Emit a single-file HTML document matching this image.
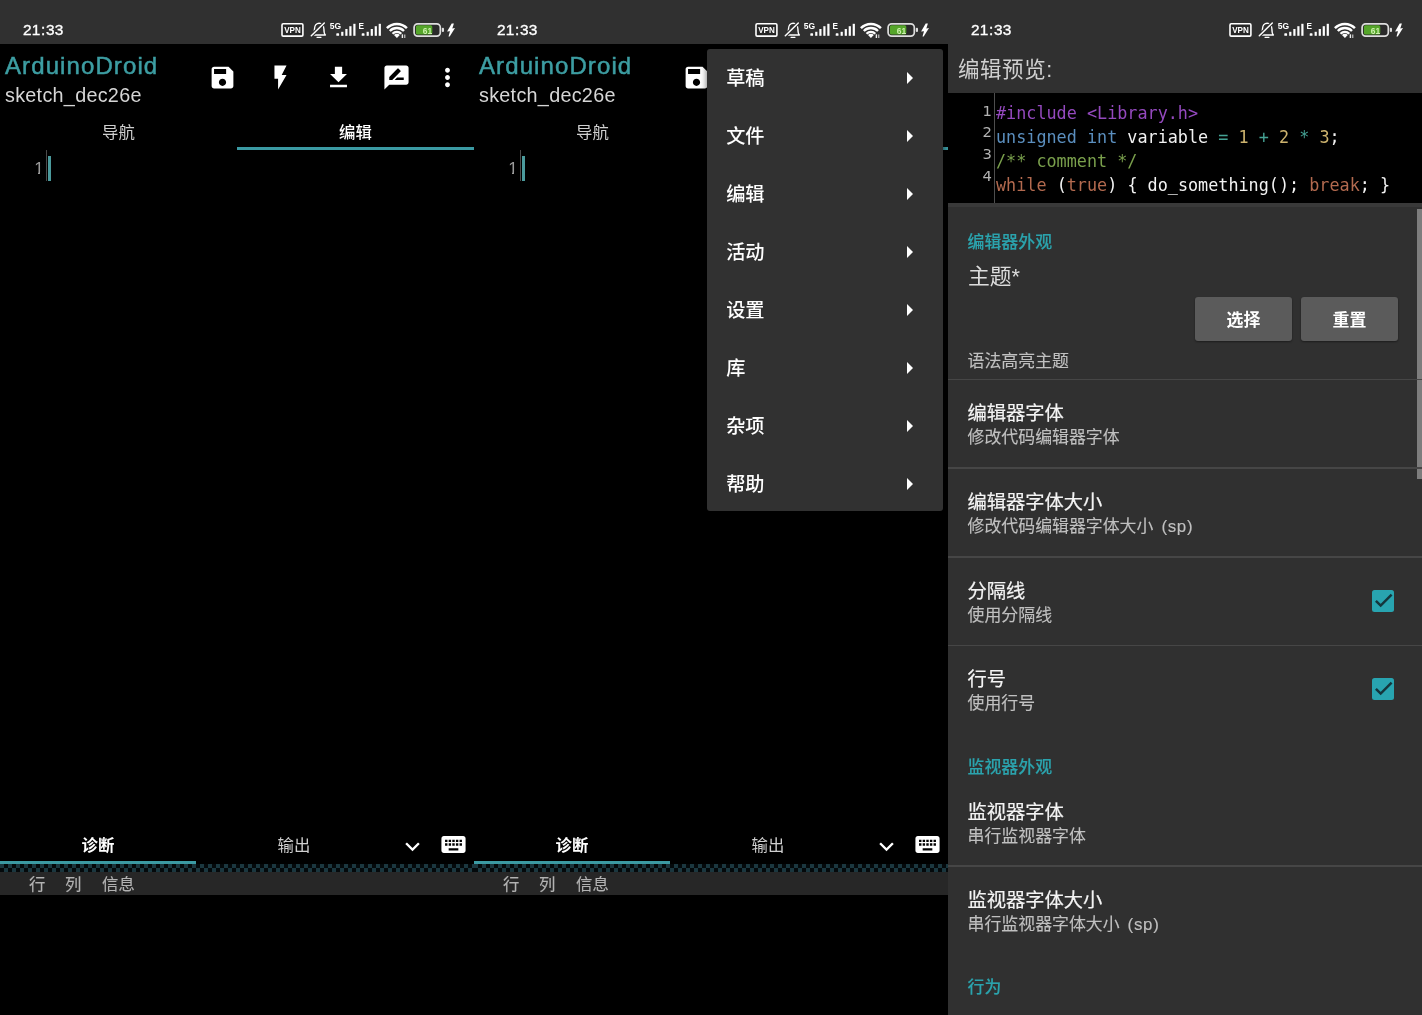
<!DOCTYPE html>
<html lang="zh-CN">
<head>
<meta charset="utf-8">
<title>ArduinoDroid</title>
<style>
*{box-sizing:border-box;margin:0;padding:0}
html,body{width:1422px;height:1015px;overflow:hidden;background:#000}
body{position:relative;font-family:"Liberation Sans","Noto Sans CJK SC",sans-serif;color:#fff}
.panel{position:absolute;top:0;width:474px;height:1015px;overflow:hidden;background:#000}
#p1{left:0}#p2{left:474px}#p3{left:948px;background:#303030}
.gl{position:absolute;left:0;top:0;width:474px;height:1015px;will-change:transform}
.a{position:absolute;white-space:nowrap}
.sb{position:absolute;left:0;top:0;width:474px;height:44px;background:#303030}
.time{left:23px;top:21px;font-size:15.4px;line-height:18px;font-weight:400;color:#fff;-webkit-text-stroke:0.35px #fff;letter-spacing:0.15px}
.app{left:5px;top:51.6px;font-size:24px;line-height:28px;color:#3d9ea3;letter-spacing:1.1px;-webkit-text-stroke:0.5px #3d9ea3}
.sk{left:5px;top:83.6px;font-size:19.8px;line-height:22px;color:#d6d6d6;letter-spacing:0.28px}
.ic{position:absolute;width:29px;height:29px;fill:#fff}
.tab{font-size:16.4px;line-height:20px;width:237px;text-align:center;top:122px}
.ul{position:absolute;background:#3b9aa3}
.cb{position:absolute;left:0;width:474px;top:864px;height:8px}
.hdr{position:absolute;left:0;top:872px;width:474px;height:23px;background:#272727}
.hdr span{position:absolute;top:2px;font-size:16.4px;line-height:20px;color:#b2b2b2;white-space:nowrap;-webkit-text-stroke:0.15px #b2b2b2}
.menu{position:absolute;left:233px;top:49px;width:236px;height:462px;background:#313131;border-radius:3px;box-shadow:0 2px 6px rgba(0,0,0,.6)}
.mi{position:absolute;left:19.2px;font-size:19.2px;line-height:24px;color:#fff;white-space:nowrap;font-weight:500;margin-top:1px}
.ma{position:absolute;left:200px;width:0;height:0;border-left:6.8px solid #fff;border-top:6px solid transparent;border-bottom:6px solid transparent;margin-top:-0.8px}
.code{position:absolute;left:0;top:93px;width:474px;height:110px;background:#000}
.ln{position:absolute;right:430.2px;font-family:"DejaVu Sans",sans-serif;font-size:14.8px;line-height:18px;color:#b4b4b4}
.cl{position:absolute;left:48px;font-family:"DejaVu Sans Mono","Liberation Mono",monospace;font-size:16.8px;line-height:24px;white-space:pre;color:#f2f2f2}
.cat{left:19.6px;font-size:16.9px;line-height:20px;font-weight:500;color:#2ba3ad;-webkit-text-stroke:0.12px #2ba3ad;margin-top:1.5px}
.ti{left:19.4px;font-size:19.3px;line-height:24px;color:#f4f4f4;font-weight:400;-webkit-text-stroke:0.2px #f4f4f4;margin-top:1.5px}
.su{left:19.6px;font-size:16.9px;line-height:20px;color:#c0c0c0;margin-top:1px;-webkit-text-stroke:0.12px #c0c0c0}
.sp{margin-left:8px;letter-spacing:0.7px}
.dv{position:absolute;left:0;width:474px;height:1.5px;background:#464646}
.btn{position:absolute;top:297px;height:44px;width:97px;background:#5b5b5b;border-radius:3px;font-size:16.9px;font-weight:700;line-height:44px;padding-top:2px;text-align:center;color:#fff;box-shadow:0 1px 2px rgba(0,0,0,.4)}
.chk{position:absolute;left:424px;width:22px;height:22px;background:#28a4b0;border-radius:2.5px}
.lnum{left:32px;width:11.6px;text-align:right;top:159px;font-size:17px;line-height:20px;color:#9a9a9a}
</style>
</head>
<body>
<div class="panel" id="p1">
<div class="gl">
<div class="sb"></div>
<div class="a time">21<span style="margin:0 0.6px">:</span>33</div>
<svg class="a" style="left:0;top:0" width="474" height="44" viewBox="0 0 474 44">
<rect x="282" y="23.7" width="20.9" height="12.4" rx="1.2" fill="#262626" stroke="#fff" stroke-width="1.6"/>
<text x="292.5" y="33" font-family="Liberation Sans, sans-serif" font-size="8.8" font-weight="700" fill="#fff" text-anchor="middle" textLength="16.6" lengthAdjust="spacingAndGlyphs">VPN</text>
<path d="M313 35 L325.4 35 C323.9 33.6 323.9 32 323.9 29 C323.9 25.4 321.8 23.2 319.2 23.2 C316.6 23.2 314.5 25.4 314.5 29 C314.5 32 314.5 33.6 313 35 Z" fill="none" stroke="#fff" stroke-width="1.4" stroke-linejoin="round"/>
<path d="M317 37.3 h4" stroke="#fff" stroke-width="1.2" stroke-linecap="round"/>
<path d="M311.4 35.6 L324.2 23" stroke="#303030" stroke-width="3.6"/>
<path d="M311.3 35.7 L324.3 23" stroke="#fff" stroke-width="1.5" stroke-linecap="round"/>
<text x="329.8" y="28.6" font-family="Liberation Sans, sans-serif" font-size="8.2" font-weight="700" fill="#fff" textLength="11.4" lengthAdjust="spacingAndGlyphs">5G</text>
<g fill="#fff">
<rect x="336.3" y="33.3" width="2.8" height="2.5" rx=".6"/><rect x="341.2" y="31.8" width="2.2" height="4"/><rect x="345.3" y="29" width="2.2" height="6.8"/><rect x="349.3" y="26.2" width="2.2" height="9.6"/><rect x="353.3" y="23.8" width="2.2" height="12"/>
<rect x="361.7" y="33.3" width="2.8" height="2.5" rx=".6"/><rect x="366.6" y="31.8" width="2.2" height="4"/><rect x="370.7" y="29" width="2.2" height="6.8"/><rect x="374.7" y="26.2" width="2.2" height="9.6"/><rect x="378.7" y="23.8" width="2.2" height="12"/>
</g>
<text x="358.4" y="28.6" font-family="Liberation Sans, sans-serif" font-size="8.2" font-weight="700" fill="#fff">E</text>
<g fill="none" stroke="#fff">
<path d="M386.9 28.1 A14.05 14.05 0 0 1 406.9 28.1" stroke-width="2.5"/>
<path d="M389.8 31 A9.95 9.95 0 0 1 404 31" stroke-width="2.3"/>
<path d="M392.5 33.7 A6.1 6.1 0 0 1 401.3 33.7" stroke-width="2.2"/>
</g>
<path d="M396.9 37.9 L394 35.1 A4 4 0 0 1 399.8 35.1 Z" fill="#fff"/>
<rect x="401.7" y="34.3" width="1.4" height="3.7" fill="#f0f0f0"/><rect x="404.3" y="34.5" width="1" height="3.5" fill="#e0e0e0"/>
<rect x="414.1" y="23.8" width="26.2" height="12.4" rx="3.6" fill="#2a2a2a" stroke="#dedede" stroke-width="1.7"/>
<rect x="415.9" y="25.3" width="16.4" height="9.2" rx="1.6" fill="#55a52a"/>
<text x="427.5" y="33.5" font-family="Liberation Sans, sans-serif" font-size="9.6" font-weight="700" fill="#cdf2ae" text-anchor="middle" textLength="9.4" lengthAdjust="spacingAndGlyphs">61</text>
<rect x="441.8" y="27.8" width="2.2" height="4.2" rx="1" fill="#dedede"/>
<path d="M451.7 23.6 L453.9 23.6 L452.3 28.4 L455 28.1 L449.7 36.4 L448.5 36.4 L450 31.3 L447.1 31.6 Z" fill="#fff"/>
</svg>
<div class="a app">ArduinoDroid</div>
<div class="a sk">sketch_dec26e</div>
<svg class="ic" style="left:208.1px;top:63.0px" viewBox="0 0 24 24"><path d="M17 3H5c-1.11 0-2 .9-2 2v14c0 1.1.89 2 2 2h14c1.1 0 2-.9 2-2V7l-4-4zm-5 16c-1.66 0-3-1.34-3-3s1.34-3 3-3 3 1.34 3 3-1.34 3-3 3zm3-10H5V5h10v4z"/></svg>
<svg class="ic" style="left:265.5px;top:63.3px" viewBox="0 0 24 24"><path d="M7 2v11h3v9l7-12h-4l4-8z"/></svg>
<svg class="ic" style="left:324.2px;top:62.8px" viewBox="0 0 24 24"><path d="M19 9h-4V3H9v6H5l7 7 7-7zM5 18v2h14v-2H5z"/></svg>
<svg class="ic" style="left:382.2px;top:63.0px" viewBox="0 0 24 24"><path d="M20 2H4c-1.1 0-1.99.9-1.99 2L2 22l4-4h14c1.1 0 2-.9 2-2V4c0-1.1-.9-2-2-2zM6 14v-2.47l6.88-6.88c.2-.2.51-.2.71 0l1.77 1.77c.2.2.2.51 0 .71L8.47 14H6zm12 0h-7.5l2-2H18v2z"/></svg>
<svg class="ic" style="left:433.1px;top:63.2px" viewBox="0 0 24 24"><path d="M12 8c1.1 0 2-.9 2-2s-.9-2-2-2-2 .9-2 2 .9 2 2 2zm0 2c-1.1 0-2 .9-2 2s.9 2 2 2 2-.9 2-2-.9-2-2-2zm0 6c-1.1 0-2 .9-2 2s.9 2 2 2 2-.9 2-2-.9-2-2-2z"/></svg>
<div class="a tab" style="left:0;color:#cfcfcf">导航</div>
<div class="a tab" style="left:237px;color:#fff;font-weight:500">编辑</div>
<div class="ul" style="left:237px;top:147px;width:237px;height:3px"></div>
<div class="a" style="left:46px;top:150px;width:1px;height:31px;background:#4a4a4a"></div>
<div class="a lnum">1</div><div class="a" style="left:34px;top:171.5px;width:4px;height:3px;background:#000"></div><div class="a" style="left:40px;top:171.5px;width:4px;height:3px;background:#000"></div>
<div class="a" style="left:48px;top:156px;width:3px;height:25px;background:#4b9a9c"></div>
<div class="a tab" style="left:0;width:196px;top:835px;color:#fff;font-weight:700">诊断</div>
<div class="a tab" style="left:196px;width:196px;top:835px;color:#cfcfcf">输出</div>
<div class="ul" style="left:0;top:861px;width:196px;height:3px"></div>
<svg class="ic" style="left:397.8px;top:832.2px" viewBox="0 0 24 24"><path d="M16.59 8.59L12 13.17 7.41 8.59 6 10l6 6 6-6z"/></svg>
<svg class="ic" style="left:439.0px;top:830.0px" viewBox="0 0 24 24"><path d="M20 5H4c-1.1 0-1.99.9-1.99 2L2 17c0 1.1.9 2 2 2h16c1.1 0 2-.9 2-2V7c0-1.1-.9-2-2-2zm-9 3h2v2h-2V8zm0 3h2v2h-2v-2zM8 8h2v2H8V8zm0 3h2v2H8v-2zm-1 2H5v-2h2v2zm0-3H5V8h2v2zm9 7H8v-2h8v2zm0-4h-2v-2h2v2zm0-3h-2V8h2v2zm3 3h-2v-2h2v2zm0-3h-2V8h2v2z"/></svg>
<svg class="cb" viewBox="0 0 474 8"><defs><pattern id="cka" width="8" height="8" patternUnits="userSpaceOnUse"><rect width="8" height="8" fill="#04090b"/><rect x="0" y="0" width="4" height="4" fill="#1b373f"/><rect x="4" y="4" width="4" height="4" fill="#1b373f"/></pattern></defs><rect width="474" height="8" fill="url(#cka)"/></svg>
<div class="hdr"><span style="left:29px">行</span><span style="left:65px">列</span><span style="left:102px">信息</span></div>
</div></div>
<div class="panel" id="p2">
<div class="gl">
<div class="sb"></div>
<div class="a time">21<span style="margin:0 0.6px">:</span>33</div>
<svg class="a" style="left:0;top:0" width="474" height="44" viewBox="0 0 474 44">
<rect x="282" y="23.7" width="20.9" height="12.4" rx="1.2" fill="#262626" stroke="#fff" stroke-width="1.6"/>
<text x="292.5" y="33" font-family="Liberation Sans, sans-serif" font-size="8.8" font-weight="700" fill="#fff" text-anchor="middle" textLength="16.6" lengthAdjust="spacingAndGlyphs">VPN</text>
<path d="M313 35 L325.4 35 C323.9 33.6 323.9 32 323.9 29 C323.9 25.4 321.8 23.2 319.2 23.2 C316.6 23.2 314.5 25.4 314.5 29 C314.5 32 314.5 33.6 313 35 Z" fill="none" stroke="#fff" stroke-width="1.4" stroke-linejoin="round"/>
<path d="M317 37.3 h4" stroke="#fff" stroke-width="1.2" stroke-linecap="round"/>
<path d="M311.4 35.6 L324.2 23" stroke="#303030" stroke-width="3.6"/>
<path d="M311.3 35.7 L324.3 23" stroke="#fff" stroke-width="1.5" stroke-linecap="round"/>
<text x="329.8" y="28.6" font-family="Liberation Sans, sans-serif" font-size="8.2" font-weight="700" fill="#fff" textLength="11.4" lengthAdjust="spacingAndGlyphs">5G</text>
<g fill="#fff">
<rect x="336.3" y="33.3" width="2.8" height="2.5" rx=".6"/><rect x="341.2" y="31.8" width="2.2" height="4"/><rect x="345.3" y="29" width="2.2" height="6.8"/><rect x="349.3" y="26.2" width="2.2" height="9.6"/><rect x="353.3" y="23.8" width="2.2" height="12"/>
<rect x="361.7" y="33.3" width="2.8" height="2.5" rx=".6"/><rect x="366.6" y="31.8" width="2.2" height="4"/><rect x="370.7" y="29" width="2.2" height="6.8"/><rect x="374.7" y="26.2" width="2.2" height="9.6"/><rect x="378.7" y="23.8" width="2.2" height="12"/>
</g>
<text x="358.4" y="28.6" font-family="Liberation Sans, sans-serif" font-size="8.2" font-weight="700" fill="#fff">E</text>
<g fill="none" stroke="#fff">
<path d="M386.9 28.1 A14.05 14.05 0 0 1 406.9 28.1" stroke-width="2.5"/>
<path d="M389.8 31 A9.95 9.95 0 0 1 404 31" stroke-width="2.3"/>
<path d="M392.5 33.7 A6.1 6.1 0 0 1 401.3 33.7" stroke-width="2.2"/>
</g>
<path d="M396.9 37.9 L394 35.1 A4 4 0 0 1 399.8 35.1 Z" fill="#fff"/>
<rect x="401.7" y="34.3" width="1.4" height="3.7" fill="#f0f0f0"/><rect x="404.3" y="34.5" width="1" height="3.5" fill="#e0e0e0"/>
<rect x="414.1" y="23.8" width="26.2" height="12.4" rx="3.6" fill="#2a2a2a" stroke="#dedede" stroke-width="1.7"/>
<rect x="415.9" y="25.3" width="16.4" height="9.2" rx="1.6" fill="#55a52a"/>
<text x="427.5" y="33.5" font-family="Liberation Sans, sans-serif" font-size="9.6" font-weight="700" fill="#cdf2ae" text-anchor="middle" textLength="9.4" lengthAdjust="spacingAndGlyphs">61</text>
<rect x="441.8" y="27.8" width="2.2" height="4.2" rx="1" fill="#dedede"/>
<path d="M451.7 23.6 L453.9 23.6 L452.3 28.4 L455 28.1 L449.7 36.4 L448.5 36.4 L450 31.3 L447.1 31.6 Z" fill="#fff"/>
</svg>
<div class="a app">ArduinoDroid</div>
<div class="a sk">sketch_dec26e</div>
<svg class="ic" style="left:208.1px;top:63.0px" viewBox="0 0 24 24"><path d="M17 3H5c-1.11 0-2 .9-2 2v14c0 1.1.89 2 2 2h14c1.1 0 2-.9 2-2V7l-4-4zm-5 16c-1.66 0-3-1.34-3-3s1.34-3 3-3 3 1.34 3 3-1.34 3-3 3zm3-10H5V5h10v4z"/></svg>
<div class="a tab" style="left:0;color:#cfcfcf">导航</div>
<div class="a tab" style="left:237px;color:#fff;font-weight:500">编辑</div>
<div class="ul" style="left:237px;top:147px;width:237px;height:3px"></div>
<div class="a" style="left:46px;top:150px;width:1px;height:31px;background:#4a4a4a"></div>
<div class="a lnum">1</div><div class="a" style="left:34px;top:171.5px;width:4px;height:3px;background:#000"></div><div class="a" style="left:40px;top:171.5px;width:4px;height:3px;background:#000"></div>
<div class="a" style="left:48px;top:156px;width:3px;height:25px;background:#4b9a9c"></div>
<div class="a tab" style="left:0;width:196px;top:835px;color:#fff;font-weight:700">诊断</div>
<div class="a tab" style="left:196px;width:196px;top:835px;color:#cfcfcf">输出</div>
<div class="ul" style="left:0;top:861px;width:196px;height:3px"></div>
<svg class="ic" style="left:397.8px;top:832.2px" viewBox="0 0 24 24"><path d="M16.59 8.59L12 13.17 7.41 8.59 6 10l6 6 6-6z"/></svg>
<svg class="ic" style="left:439.0px;top:830.0px" viewBox="0 0 24 24"><path d="M20 5H4c-1.1 0-1.99.9-1.99 2L2 17c0 1.1.9 2 2 2h16c1.1 0 2-.9 2-2V7c0-1.1-.9-2-2-2zm-9 3h2v2h-2V8zm0 3h2v2h-2v-2zM8 8h2v2H8V8zm0 3h2v2H8v-2zm-1 2H5v-2h2v2zm0-3H5V8h2v2zm9 7H8v-2h8v2zm0-4h-2v-2h2v2zm0-3h-2V8h2v2zm3 3h-2v-2h2v2zm0-3h-2V8h2v2z"/></svg>
<svg class="cb" viewBox="0 0 474 8"><defs><pattern id="ckb" width="8" height="8" patternUnits="userSpaceOnUse"><rect width="8" height="8" fill="#04090b"/><rect x="0" y="0" width="4" height="4" fill="#1b373f"/><rect x="4" y="4" width="4" height="4" fill="#1b373f"/></pattern></defs><rect width="474" height="8" fill="url(#ckb)"/></svg>
<div class="hdr"><span style="left:29px">行</span><span style="left:65px">列</span><span style="left:102px">信息</span></div>
<div class="menu">
<div class="mi" style="top:16.5px">草稿</div><div class="ma" style="top:23.5px"></div>
<div class="mi" style="top:74.5px">文件</div><div class="ma" style="top:81.5px"></div>
<div class="mi" style="top:132.5px">编辑</div><div class="ma" style="top:139.5px"></div>
<div class="mi" style="top:190.5px">活动</div><div class="ma" style="top:197.5px"></div>
<div class="mi" style="top:248.5px">设置</div><div class="ma" style="top:255.5px"></div>
<div class="mi" style="top:306.5px">库</div><div class="ma" style="top:313.5px"></div>
<div class="mi" style="top:364.5px">杂项</div><div class="ma" style="top:371.5px"></div>
<div class="mi" style="top:422.5px">帮助</div><div class="ma" style="top:429.5px"></div>
</div>
</div></div>
<div class="panel" id="p3">
<div class="gl">
<div class="sb"></div>
<div class="a time">21<span style="margin:0 0.6px">:</span>33</div>
<svg class="a" style="left:0;top:0" width="474" height="44" viewBox="0 0 474 44">
<rect x="282" y="23.7" width="20.9" height="12.4" rx="1.2" fill="#262626" stroke="#fff" stroke-width="1.6"/>
<text x="292.5" y="33" font-family="Liberation Sans, sans-serif" font-size="8.8" font-weight="700" fill="#fff" text-anchor="middle" textLength="16.6" lengthAdjust="spacingAndGlyphs">VPN</text>
<path d="M313 35 L325.4 35 C323.9 33.6 323.9 32 323.9 29 C323.9 25.4 321.8 23.2 319.2 23.2 C316.6 23.2 314.5 25.4 314.5 29 C314.5 32 314.5 33.6 313 35 Z" fill="none" stroke="#fff" stroke-width="1.4" stroke-linejoin="round"/>
<path d="M317 37.3 h4" stroke="#fff" stroke-width="1.2" stroke-linecap="round"/>
<path d="M311.4 35.6 L324.2 23" stroke="#303030" stroke-width="3.6"/>
<path d="M311.3 35.7 L324.3 23" stroke="#fff" stroke-width="1.5" stroke-linecap="round"/>
<text x="329.8" y="28.6" font-family="Liberation Sans, sans-serif" font-size="8.2" font-weight="700" fill="#fff" textLength="11.4" lengthAdjust="spacingAndGlyphs">5G</text>
<g fill="#fff">
<rect x="336.3" y="33.3" width="2.8" height="2.5" rx=".6"/><rect x="341.2" y="31.8" width="2.2" height="4"/><rect x="345.3" y="29" width="2.2" height="6.8"/><rect x="349.3" y="26.2" width="2.2" height="9.6"/><rect x="353.3" y="23.8" width="2.2" height="12"/>
<rect x="361.7" y="33.3" width="2.8" height="2.5" rx=".6"/><rect x="366.6" y="31.8" width="2.2" height="4"/><rect x="370.7" y="29" width="2.2" height="6.8"/><rect x="374.7" y="26.2" width="2.2" height="9.6"/><rect x="378.7" y="23.8" width="2.2" height="12"/>
</g>
<text x="358.4" y="28.6" font-family="Liberation Sans, sans-serif" font-size="8.2" font-weight="700" fill="#fff">E</text>
<g fill="none" stroke="#fff">
<path d="M386.9 28.1 A14.05 14.05 0 0 1 406.9 28.1" stroke-width="2.5"/>
<path d="M389.8 31 A9.95 9.95 0 0 1 404 31" stroke-width="2.3"/>
<path d="M392.5 33.7 A6.1 6.1 0 0 1 401.3 33.7" stroke-width="2.2"/>
</g>
<path d="M396.9 37.9 L394 35.1 A4 4 0 0 1 399.8 35.1 Z" fill="#fff"/>
<rect x="401.7" y="34.3" width="1.4" height="3.7" fill="#f0f0f0"/><rect x="404.3" y="34.5" width="1" height="3.5" fill="#e0e0e0"/>
<rect x="414.1" y="23.8" width="26.2" height="12.4" rx="3.6" fill="#2a2a2a" stroke="#dedede" stroke-width="1.7"/>
<rect x="415.9" y="25.3" width="16.4" height="9.2" rx="1.6" fill="#55a52a"/>
<text x="427.5" y="33.5" font-family="Liberation Sans, sans-serif" font-size="9.6" font-weight="700" fill="#cdf2ae" text-anchor="middle" textLength="9.4" lengthAdjust="spacingAndGlyphs">61</text>
<rect x="441.8" y="27.8" width="2.2" height="4.2" rx="1" fill="#dedede"/>
<path d="M451.7 23.6 L453.9 23.6 L452.3 28.4 L455 28.1 L449.7 36.4 L448.5 36.4 L450 31.3 L447.1 31.6 Z" fill="#fff"/>
</svg>
<div class="a" style="left:10px;top:57.2px;font-size:21.5px;letter-spacing:0.55px;line-height:26px;color:#d0d0d0">编辑预览:</div>
<div class="code">
<div class="a" style="left:46px;top:0;width:1px;height:110px;background:#4e4e4e"></div>
<div class="ln" style="top:8.5px">1</div>
<div class="ln" style="top:30.3px">2</div>
<div class="ln" style="top:52.1px">3</div>
<div class="ln" style="top:73.9px">4</div>
<div class="cl" style="top:7.5px"><span style="color:#9449be">#include &lt;Library.h&gt;</span></div>
<div class="cl" style="top:31.5px"><span style="color:#5b8fbf">unsigned int</span> variable <span style="color:#45a294">=</span> <span style="color:#cdb36e">1</span> <span style="color:#45a294">+</span> <span style="color:#cdb36e">2</span> <span style="color:#45a294">*</span> <span style="color:#cdb36e">3</span>;</div>
<div class="cl" style="top:55.5px"><span style="color:#7aa04c">/** comment */</span></div>
<div class="cl" style="top:79.5px"><span style="color:#b36a4f">while</span> (<span style="color:#b36a4f">true</span>) { do_something(); <span style="color:#b36a4f">break</span>; }</div>
</div>
<div class="a" style="left:0;top:203px;width:474px;height:4px;background:#393939"></div>
<div class="a" style="left:469px;top:209px;width:5px;height:270px;background:#7d7d7d"></div>
<div class="a cat" style="top:231.3px">编辑器外观</div>
<div class="a" style="left:20px;top:264px;font-size:21.8px;line-height:26px;color:#dcdcdc">主题*</div>
<div class="btn" style="left:247px">选择</div><div class="btn" style="left:353px">重置</div>
<div class="a su" style="top:350.8px">语法高亮主题</div>
<div class="dv" style="top:378.5px"></div>
<div class="a ti" style="top:400.5px;">编辑器字体</div>
<div class="a su" style="top:427.2px">修改代码编辑器字体</div>
<div class="dv" style="top:467.3px"></div>
<div class="a ti" style="top:489.2px;">编辑器字体大小</div>
<div class="a su" style="top:516.0px">修改代码编辑器字体大小<span class="sp">(sp)</span></div>
<div class="dv" style="top:556.2px"></div>
<div class="a ti" style="top:578.0px;">分隔线</div>
<div class="a su" style="top:604.5px">使用分隔线</div>
<div class="dv" style="top:644.6px"></div>
<div class="a ti" style="top:666.5px;">行号</div>
<div class="a su" style="top:693.0px">使用行号</div>
<div class="chk" style="top:589.5px"><svg viewBox="0 0 22 22" width="22" height="22"><path d="M3.9 10.8 L8.7 15.6 L19.6 4.7" fill="none" stroke="#15353c" stroke-width="2.5"/></svg></div><div class="chk" style="top:678.2px"><svg viewBox="0 0 22 22" width="22" height="22"><path d="M3.9 10.8 L8.7 15.6 L19.6 4.7" fill="none" stroke="#15353c" stroke-width="2.5"/></svg></div>
<div class="a cat" style="top:756.2px">监视器外观</div>
<div class="a ti" style="top:799.2px;">监视器字体</div>
<div class="a su" style="top:825.7px">串行监视器字体</div>
<div class="dv" style="top:865.0px"></div>
<div class="a ti" style="top:887.5px;">监视器字体大小</div>
<div class="a su" style="top:913.7px">串行监视器字体大小<span class="sp">(sp)</span></div>
<div class="a cat" style="top:976.5px">行为</div>
</div></div>
</body>
</html>
